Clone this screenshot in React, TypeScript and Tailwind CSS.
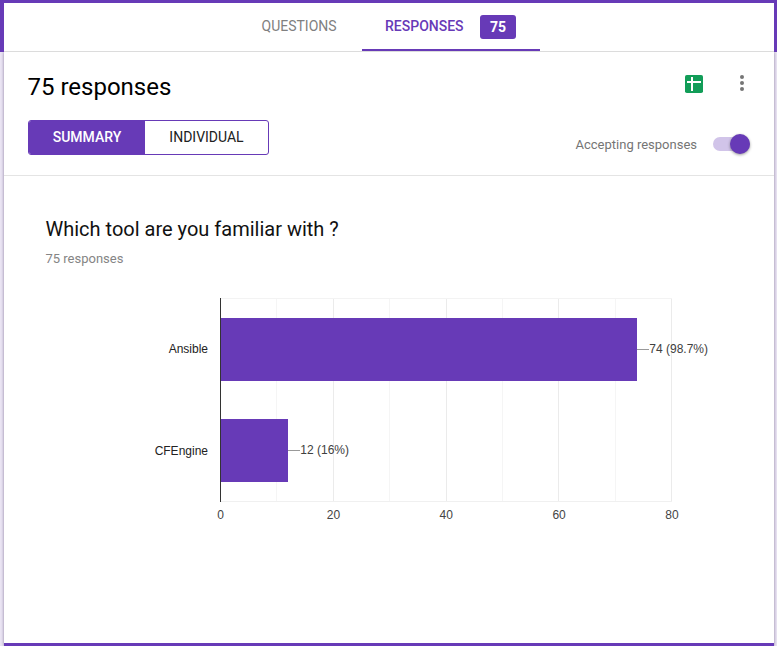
const TICKS = [0, 20, 40, 60, 80];
const MINOR = [10, 30, 50, 70];
const ROWS = [
  { name: 'Ansible', count: 74, label: '74 (98.7%)', top: 318, nameY: 353 },
  { name: 'CFEngine', count: 12, label: '12 (16%)', top: 419, nameY: 455 },
];

const AXIS_X = 220;
const UNIT = 5.64;

function ResponsesChart() {
  return (
    <svg
      className="block font-['Liberation_Sans',Arial,sans-serif] text-[12px]"
      width="770"
      height="250"
      viewBox="4 290 770 250"
      shapeRendering="crispEdges"
    >
      {MINOR.map((v) => (
        <rect key={v} x={Math.round(AXIS_X + v * UNIT)} y="298" width="1" height="204" fill="#f5f5f5" />
      ))}
      {TICKS.slice(1).map((v) => (
        <rect key={v} x={Math.round(AXIS_X + v * UNIT)} y="298" width="1" height="204" fill="#ebebeb" />
      ))}
      <rect x="221" y="298" width="451" height="1" fill="#f3f3f3" />
      <rect x="221" y="501" width="451" height="1" fill="#f0f0f0" />
      {ROWS.map((row) => {
        const end = Math.round(AXIS_X + row.count * UNIT);
        return (
          <g key={row.name}>
            <rect x="221" y={row.top} width={end - 221} height="63" fill="#673ab7" />
            <rect x={end} y={row.top + 31} width="12" height="1" fill="#999999" />
            <text x="208" y={row.nameY} textAnchor="end" fill="#222222">{row.name}</text>
            <text x={end + 12.3} y={row.top + 35} fill="#404040">{row.label}</text>
          </g>
        );
      })}
      <rect x={AXIS_X} y="298" width="1" height="204" fill="#333333" />
      {TICKS.map((v) => (
        <text key={v} x={AXIS_X + 0.7 + v * UNIT} y="519" textAnchor="middle" fill="#444444">{v}</text>
      ))}
    </svg>
  );
}

function SheetsIcon() {
  return (
    <svg width="18" height="18" viewBox="0 0 18 18">
      <rect width="18" height="18" rx="1.8" fill="#129d58" />
      <path d="M2 7h14M7 2v14" stroke="#fff" strokeWidth="2" fill="none" />
    </svg>
  );
}

function MoreIcon() {
  return (
    <svg width="4" height="16" viewBox="0 0 4 16" fill="#757575">
      <circle cx="2" cy="2" r="2" />
      <circle cx="2" cy="8" r="2" />
      <circle cx="2" cy="14" r="2" />
    </svg>
  );
}

function Tabs() {
  return (
    <nav className="ml-1 flex h-[49px] w-[770px] border-b border-[#dcdcdc] bg-white pl-[257.5px] text-[14px] leading-6">
      <div className="w-[100.5px] pt-[11px] text-[#808080]">QUESTIONS</div>
      <div className="flex w-[178px] border-b-2 border-[#673ab7] pl-[23px] pt-3 font-medium text-[#673ab7]">
        <span className="-mt-px w-[95px]">RESPONSES</span>
        <span className="h-6 w-9 rounded-[3px] bg-[#673ab7] text-center font-bold text-white">75</span>
      </div>
    </nav>
  );
}

export default function App() {
  return (
    <div className="h-[646px] w-[777px] overflow-hidden bg-[#ebe5f4] font-[Roboto,sans-serif]">
      <header className="relative z-10 bg-[#673ab7] pt-[3px]">
        <Tabs />
      </header>
      <main className="ml-1 h-[594px] w-[770px] border-b-[3px] border-[#673ab7] bg-white shadow-[0_0_3px_rgba(60,40,90,0.55)]">
        <section className="flex h-[124px] justify-between border-b border-[#e4e4e4] pl-6 pr-6">
          <div className="pt-[19px]">
            <h1 className="-ml-[0.5px] text-[24px] leading-8 text-black">75 responses</h1>
            <div className="mt-[17px] flex h-[35px] w-[241px] overflow-hidden rounded-[3px] border border-[#673ab7] text-center text-[14px] leading-[33px]">
              <div className="w-[116px] bg-[#673ab7] font-medium text-white">SUMMARY</div>
              <div className="flex-1 text-[#212121]">INDIVIDUAL</div>
            </div>
          </div>
          <div className="flex flex-col items-end pt-[23px]">
            <div className="flex gap-[37px] pr-[6px]">
              <SheetsIcon />
              <MoreIcon />
            </div>
            <div className="mt-[41px] flex h-5 items-center">
              <span className="mr-4 pt-[2px] text-[13px] leading-5 text-[#757575]">Accepting responses</span>
              <div className="flex h-[14px] w-[37px] items-center justify-end rounded-full bg-[#d1c4e9]">
                <div className="size-5 shrink-0 rounded-full bg-[#673ab7] shadow-[0_1px_3px_rgba(0,0,0,0.4)]" />
              </div>
            </div>
          </div>
        </section>
        <section className="pt-[41px]">
          <h2 className="pl-[41.5px] text-[20px] leading-6 text-[#111]">Which tool are you familiar with ?</h2>
          <p className="mb-[21px] mt-2 pl-[41.5px] text-[13px] leading-5 text-[#858585]">75 responses</p>
          <ResponsesChart />
        </section>
      </main>
    </div>
  );
}
